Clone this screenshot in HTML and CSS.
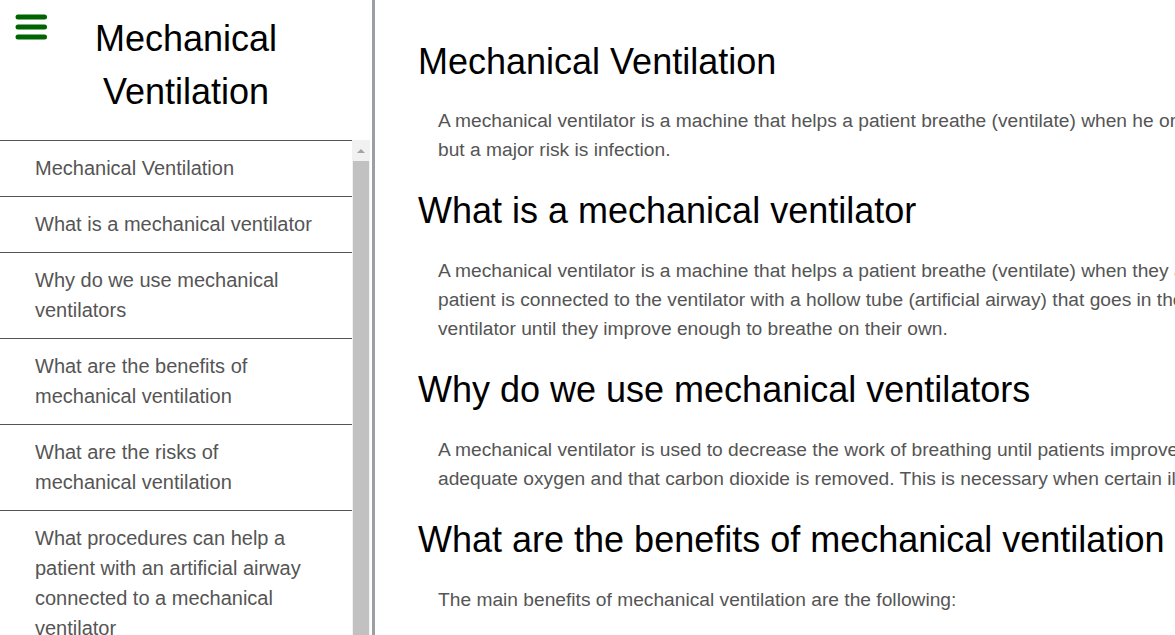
FILE: index.html
```html
<!DOCTYPE html>
<html lang="en">
<head>
<meta charset="utf-8">
<title>Mechanical Ventilation</title>
<link rel="stylesheet" href="styles.css">
</head>
<body>
<div class="page">
  <aside class="sidebar">
    <header class="side-head">
      <button class="menu-btn" aria-label="Menu">
        <svg width="32" height="26" viewBox="0 0 32 26">
          <g stroke="#006400" stroke-width="5" stroke-linecap="round">
            <line x1="3" y1="3" x2="29.5" y2="3"/>
            <line x1="3" y1="13" x2="29.5" y2="13"/>
            <line x1="3" y1="23" x2="29.5" y2="23"/>
          </g>
        </svg>
      </button>
      <div class="side-title">Mechanical<br>Ventilation</div>
    </header>
    <div class="side-body">
      <nav class="toc">
        <a class="toc-item">Mechanical Ventilation</a>
        <a class="toc-item">What is a mechanical ventilator</a>
        <a class="toc-item">Why do we use mechanical ventilators</a>
        <a class="toc-item">What are the benefits of mechanical ventilation</a>
        <a class="toc-item">What are the risks of mechanical ventilation</a>
        <a class="toc-item">What procedures can help a patient with an artificial airway connected to a mechanical ventilator</a>
        <a class="toc-item">How is a patient weaned from the ventilator</a>
      </nav>
      <div class="scrollbar">
        <div class="sb-btn"><span class="sb-arrow"></span></div>
        <div class="sb-thumb"></div>
      </div>
    </div>
  </aside>
  <main class="content">
    <h1 class="heading">Mechanical Ventilation</h1>
    <p class="para">A mechanical ventilator is a machine that helps a patient breathe (ventilate) when he or she is having surgery or cannot breathe on their own due to a critical illness. The ventilator has benefits,<br>but a major risk is infection.</p>
    <h2 class="heading">What is a mechanical ventilator</h2>
    <p class="para">A mechanical ventilator is a machine that helps a patient breathe (ventilate) when they are having surgery or cannot breathe on their own due to a critical illness. The<br>patient is connected to the ventilator with a hollow tube (artificial airway) that goes in their mouth and down into the main airway or trachea. They remain on the<br>ventilator until they improve enough to breathe on their own.</p>
    <h2 class="heading">Why do we use mechanical ventilators</h2>
    <p class="para">A mechanical ventilator is used to decrease the work of breathing until patients improve enough to no longer need it. The machine makes sure that the body receives<br>adequate oxygen and that carbon dioxide is removed. This is necessary when certain illnesses prevent normal breathing.</p>
    <h2 class="heading">What are the benefits of mechanical ventilation</h2>
    <p class="para">The main benefits of mechanical ventilation are the following:</p>
  </main>
</div>
</body>
</html>
```
FILE: styles.css
```css
* { box-sizing: border-box; }
html, body {
  margin: 0;
  padding: 0;
  height: 100%;
  overflow: hidden;
  background: #fff;
}
body {
  font-family: "Liberation Sans", Arial, sans-serif;
}
.page {
  display: flex;
  height: 100vh;
}
.sidebar {
  flex: 0 0 375px;
  width: 375px;
  display: flex;
  flex-direction: column;
  border-right: 3px solid #9b9fa3;
  min-height: 0;
}
.side-head {
  position: relative;
  flex: 0 0 140px;
  padding-top: 12px;
}
.menu-btn {
  position: absolute;
  left: 15px;
  top: 14px;
  padding: 0;
  margin: 0;
  border: 0;
  background: none;
  width: 32px;
  height: 26px;
  line-height: 0;
}
.side-title {
  text-align: center;
  font-size: 36px;
  line-height: 53px;
  color: #000;
}
.side-body {
  flex: 1 1 auto;
  display: flex;
  min-height: 0;
  overflow: hidden;
}
.toc {
  flex: 0 0 352px;
  display: flex;
  flex-direction: column;
}
.toc-item {
  display: block;
  border-top: 1px solid #555;
  padding: 12px 34px 13px 35px;
  font-size: 20px;
  line-height: 30px;
  color: #555;
}
.scrollbar {
  flex: 0 0 18px;
  display: flex;
  flex-direction: column;
  background: #f1f1f1;
}
.sb-btn {
  flex: 0 0 21px;
  display: flex;
  align-items: center;
  justify-content: center;
}
.sb-arrow {
  width: 0;
  height: 0;
  border-left: 4px solid transparent;
  border-right: 4px solid transparent;
  border-bottom: 4px solid #a3a3a3;
}
.sb-thumb {
  flex: 1 1 auto;
  margin: 0 1px;
  background: #c1c1c1;
}
.content {
  flex: 1 1 auto;
  min-width: 0;
  overflow: hidden;
  padding: 40px 0 0 43px;
}
.heading {
  margin: 25px 0 24px;
  font-size: 36px;
  line-height: 43px;
  font-weight: normal;
  color: #000;
  white-space: nowrap;
}
h1.heading { margin-top: 0; margin-bottom: 23px; }
.para {
  margin: 0 0 0 20px;
  font-size: 19.2px;
  line-height: 29px;
  color: #555;
  white-space: nowrap;
}
```
